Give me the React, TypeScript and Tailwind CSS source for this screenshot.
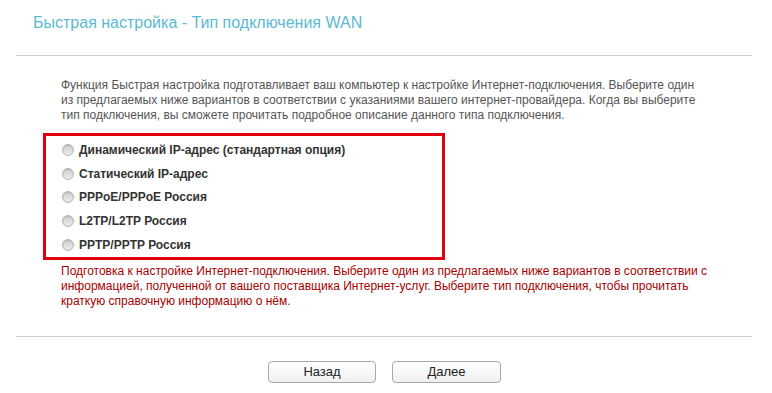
const options = [
  'Динамический IP-адрес (стандартная опция)',
  'Статический IP-адрес',
  'PPPoE/PPPoE Россия',
  'L2TP/L2TP Россия',
  'PPTP/PPTP Россия',
];

function Radio() {
  return (
    <span className="inline-block h-[12px] w-[12px] shrink-0 rounded-full border border-[#b4b4b4] bg-gradient-to-b from-[#cfcfcf] to-[#ececec] shadow-[inset_0_1px_1px_rgba(0,0,0,0.12)]" />
  );
}

export default function App() {
  return (
    <div className="h-[393px] w-[772px] overflow-hidden bg-white font-['Liberation_Sans',Arial,sans-serif]">
      <div className="pl-[33px] pt-[14px] text-[16px] leading-[18px] text-[#5bbad3]">
        Быстрая настройка - Тип подключения WAN
      </div>
      <div className="mx-[16px] mt-[23px] h-px w-[736px] bg-[#cfcfcf]" />

      <p className="mt-[22px] whitespace-nowrap pl-[61px] text-[12px] leading-[15px] text-[#555]">
        Функция Быстрая настройка подготавливает ваш компьютер к настройке Интернет-подключения. Выберите один
        <br />
        из предлагаемых ниже вариантов в соответствии с указаниями вашего интернет-провайдера. Когда вы выберите
        <br />
        тип подключения, вы сможете прочитать подробное описание данного типа подключения.
      </p>

      <div className="ml-[43px] mt-[10px] w-[402px] border-[3px] border-[#e0000f] pt-[2px]">
        {options.map((o) => (
          <label key={o} className="flex h-[23.75px] items-center gap-[5px] pl-[16px]">
            <Radio />
            <span className="text-[12px] font-bold text-[#333]">{o}</span>
          </label>
        ))}
      </div>

      <p className="mt-[4px] whitespace-nowrap pl-[61px] text-[12px] leading-[15px] text-[#a80000]">
        Подготовка к настройке Интернет-подключения. Выберите один из предлагаемых ниже вариантов в соответствии с
        <br />
        информацией, полученной от вашего поставщика Интернет-услуг. Выберите тип подключения, чтобы прочитать
        <br />
        краткую справочную информацию о нём.
      </p>

      <div className="mx-[16px] mt-[27px] h-px w-[736px] bg-[#cfcfcf]" />

      <div className="mt-[24px] flex gap-[16px] pl-[268px]">
        <button className="h-[22px] w-[108px] rounded-[4px] border border-[#a8a8a8] bg-gradient-to-b from-white to-[#f0f0f0] text-[13px] text-[#222]">
          Назад
        </button>
        <button className="h-[22px] w-[109px] rounded-[4px] border border-[#a8a8a8] bg-gradient-to-b from-white to-[#f0f0f0] text-[13px] text-[#222]">
          Далее
        </button>
      </div>
    </div>
  );
}
